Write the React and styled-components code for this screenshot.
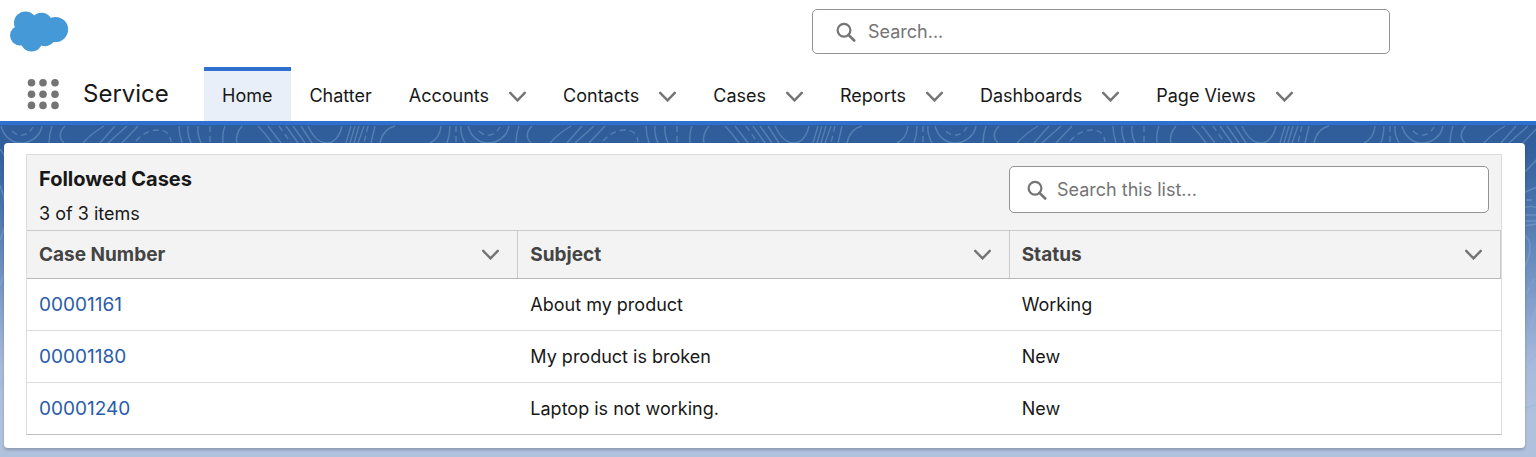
import React from "react";
import styled, { createGlobalStyle } from "styled-components";

const GlobalStyle = createGlobalStyle`
	*, *::before, *::after {
		box-sizing: border-box;
	}

	html, body, #root {
		height: 100%;
	}

	body {
		margin: 0;
		background-color: #b0c1de;
		color: #181818;
		font-family: Inter, "Liberation Sans", sans-serif;
		font-size: 18px;
		line-height: 24px;
	}
`;

const Page = styled.div`
	display: flex;
	flex-direction: column;
	min-height: 100%;
`;

const Header = styled.header`
	background-color: #fff;
	border-bottom: 4px solid #2e6fd0;
`;

const TopBar = styled.div`
	display: grid;
	grid-template-columns: 804px minmax(200px, 578px);
	align-items: center;
	column-gap: 8px;
	height: 67px;
	padding-bottom: 4px;
`;

const LogoLink = styled.a`
	display: flex;
	width: 60px;
	margin-left: 9px;
`;

const SearchBox = styled.label`
	display: flex;
	align-items: center;
	gap: ${(props) => (props.$compact ? "10px" : "12px")};
	height: ${(props) => (props.$compact ? "47px" : "45px")};
	width: ${(props) => (props.$compact ? "480px" : "auto")};
	padding: 0 ${(props) => (props.$compact ? "17px" : "23px")};

	background-color: #fff;
	border: 1px solid #939393;
	border-radius: 5px;
	color: #747474;
`;

const SearchInput = styled.input`
	flex: 1;
	min-width: 0;
	padding: 0;

	background: transparent;
	border: none;
	outline: none;
	color: #181818;
	font: inherit;

	&::placeholder {
		color: #747474;
		opacity: 1;
	}
`;

const NavBar = styled.nav`
	display: flex;
	height: 54px;
	padding-left: 27px;
`;

const LauncherButton = styled.button`
	display: flex;
	align-items: center;
	width: 33px;
	padding: 0;

	background: none;
	border: none;
	color: #747474;
`;

const AppName = styled.span`
	width: 121px;
	margin-left: 23px;

	font-size: 24px;
	line-height: 54px;
`;

const NavList = styled.ul`
	display: flex;
	margin: 0;
	padding: 0;
	list-style: none;
`;

const NavItem = styled.li`
	display: flex;
	align-items: center;
	gap: 20px;
	padding: 0 19px 0 18px;

	background-color: ${(props) => (props.$active ? "#e8eff9" : "transparent")};
	border-top: 4px solid ${(props) => (props.$active ? "#2e6fd0" : "transparent")};
`;

const NavLink = styled.a`
	color: inherit;
	text-decoration: none;
	white-space: nowrap;
`;

const IconButton = styled.button`
	display: flex;
	padding: 0;

	background: none;
	border: none;
	color: #747474;
`;

const Main = styled.main`
	display: grid;
	flex: 1;

	background: linear-gradient(#2e5d99 0, #315f9d 20px, #4672ab 75px, #7f9cc8 170px, #a8badb 240px, #b0c1de 290px);
`;

const Contours = styled.svg`
	grid-area: 1 / 1;
	width: 100%;
	height: 100%;
`;

const Card = styled.section`
	grid-area: 1 / 1;
	z-index: 1;
	align-self: start;
	margin: 18px 11px 9px 4px;
	padding: 11px 23px 13px 22px;

	background-color: #fff;
	border-radius: 4px;
	box-shadow: 0 2px 3px rgba(0, 0, 0, 0.2);
`;

const ListPanel = styled.div`
	border: 1px solid #dcdcdc;
	border-bottom-color: #c0c0c0;
`;

const ListHeader = styled.div`
	display: flex;
	justify-content: space-between;
	align-items: flex-start;
	padding: 11px 12px 4px;

	background-color: #f3f3f3;
`;

const ListTitle = styled.h2`
	margin: 0 0 10px;

	font-size: 20px;
	font-weight: 700;
	line-height: 26px;
`;

const ListCount = styled.p`
	margin: 0;
`;

const CaseTable = styled.table`
	width: 100%;
	table-layout: fixed;
	border-collapse: separate;
	border-spacing: 0;
`;

const HeadCell = styled.th`
	height: 49px;
	padding: 0 18px 0 12px;

	background-color: #f3f3f3;
	border: 1px solid #c9c9c9;
	border-left: none;
	border-bottom-color: #b8b8b8;
	color: #444;
	font-size: 19px;
	text-align: left;
`;

const HeadContent = styled.div`
	display: flex;
	justify-content: space-between;
	align-items: center;
`;

const Cell = styled.td`
	height: 52px;
	padding: 0 12px;

	border-bottom: 1px solid #dcdcdc;

	tr:last-child & {
		height: 51px;
		border-bottom: none;
	}
`;

const CaseLink = styled.a`
	color: #2a5caa;
	font-size: 19px;
	text-decoration: none;
`;

const navItems = [
  { label: "Home", active: true },
  { label: "Chatter" },
  { label: "Accounts", menu: true },
  { label: "Contacts", menu: true },
  { label: "Cases", menu: true },
  { label: "Reports", menu: true },
  { label: "Dashboards", menu: true },
  { label: "Page Views", menu: true },
];

const columns = ["Case Number", "Subject", "Status"];

const cases = [
  { number: "00001161", subject: "About my product", status: "Working" },
  { number: "00001180", subject: "My product is broken", status: "New" },
  { number: "00001240", subject: "Laptop is not working.", status: "New" },
];

const CloudLogo = () => (
  <svg width="60" height="42" viewBox="0 0 60 42" fill="#4599d7" aria-hidden="true">
    <circle cx="16.5" cy="12" r="11.5" />
    <circle cx="32.5" cy="12.5" r="10.8" />
    <circle cx="46.5" cy="18.5" r="12.6" />
    <circle cx="11" cy="24.5" r="10" />
    <circle cx="22.5" cy="29.5" r="11" />
    <circle cx="36" cy="24.5" r="10.7" />
    <path d="M14 12h34v14H14z" />
  </svg>
);

const SearchIcon = () => (
  <svg width="20" height="20" viewBox="0 0 20 20" fill="none" stroke="currentColor" aria-hidden="true">
    <circle cx="8" cy="8.3" r="6.4" strokeWidth="2.2" />
    <path d="M12.5 12.8L18.2 18.5" strokeWidth="2.6" strokeLinecap="round" />
  </svg>
);

const ChevronIcon = () => (
  <svg width="17" height="11" viewBox="0 0 17 11" fill="none" stroke="currentColor" aria-hidden="true">
    <path d="M1.2 1.8L8.5 9.4L15.8 1.8" strokeWidth="2.4" strokeLinecap="round" />
  </svg>
);

const LauncherIcon = () => (
  <svg width="33" height="32" viewBox="0 0 33 32" fill="currentColor" aria-hidden="true">
    {[4.5, 16, 28].map((x) =>
      [4.8, 16.2, 27.4].map((y) => <circle key={`${x}-${y}`} cx={x} cy={y} r="3.8" />)
    )}
  </svg>
);

// Map-like contour lines, repeated along the page
const ContourBackground = () => (
  <Contours aria-hidden="true">
    <defs>
      <pattern id="contours" width="467" height="340" patternUnits="userSpaceOnUse">
        <g fill="none" stroke="#8fb4da" strokeOpacity="0.38" strokeWidth="1.4">
          <path d="M1 1C4 12 12 18 21 18S40 12 42 1M52 1Q49 9 49 18M65 1C59 7 59 13 64 18" />
          <path d="M104 1Q92 8 83 18M115 1L100 18M127 1L108 18M138 1L122 18" />
          <path d="M179 1Q179 9 182 18M188 1Q187 9 191 18M198 1Q197 9 201 18M225 1Q222 9 223 18M242 1Q235 9 237 18" />
          <path d="M258 1Q265 8 272 18M268 1L281 18M286 1L298 18M293 1L305 18M301 1L312 18" />
          <path d="M308 1C313 12 320 18 327 18S340 11 342 1M351 1L346 18M355 1L350 18M359 1L354 18M364 1L358 18M375 1L371 18" />
          <path d="M395 1C387 3 382 8 380 18M441 1Q440 13 430 18M450 1Q450 10 447 18M461 1Q460 9 465 18" />
          <path d="M12 6Q17 11 23 10T33 2M136 16Q146 5 158 5T171 17M210 1V18M279 1L291 18M368 1L364 18M456 1V18" strokeDasharray="6 4" />
          <path d="M122 48Q128 44 136 34M122 68L136 62M122 83Q130 80 136 83M122 90H136M122 96H136M122 101L136 99" />
          <path d="M122 109C133 116 130 130 122 145M122 225Q131 204 136 178M122 245Q130 238 136 228M122 284L136 279" />
          <path d="M125 75H132M126 168L134 152M126 236L132 233" strokeDasharray="6 4" />
          <path d="M0 24Q5 30 7 40M0 60Q4 70 5 82M0 115Q5 103 6 94M0 160L6 145M0 260L6 250" />
        </g>
      </pattern>
    </defs>
    <rect width="100%" height="340" fill="url(#contours)" />
  </Contours>
);

const App = () => {
  return (
    <Page>
      <GlobalStyle />
      <Header>
        <TopBar>
          <LogoLink href="#" aria-label="Salesforce">
            <CloudLogo />
          </LogoLink>
          <SearchBox>
            <SearchIcon />
            <SearchInput type="text" placeholder="Search..." aria-label="Search" />
          </SearchBox>
        </TopBar>
        <NavBar>
          <LauncherButton type="button" aria-label="App Launcher">
            <LauncherIcon />
          </LauncherButton>
          <AppName>Service</AppName>
          <NavList>
            {navItems.map((item) => (
              <NavItem key={item.label} $active={item.active}>
                <NavLink href="#" aria-current={item.active ? "page" : undefined}>
                  {item.label}
                </NavLink>
                {item.menu && (
                  <IconButton type="button" aria-label={`${item.label} list`}>
                    <ChevronIcon />
                  </IconButton>
                )}
              </NavItem>
            ))}
          </NavList>
        </NavBar>
      </Header>
      <Main>
        <ContourBackground />
        <Card>
          <ListPanel>
            <ListHeader>
              <div>
                <ListTitle>Followed Cases</ListTitle>
                <ListCount>3 of 3 items</ListCount>
              </div>
              <SearchBox $compact>
                <SearchIcon />
                <SearchInput type="text" placeholder="Search this list..." aria-label="Search this list" />
              </SearchBox>
            </ListHeader>
            <CaseTable>
              <thead>
                <tr>
                  {columns.map((column) => (
                    <HeadCell key={column} scope="col">
                      <HeadContent>
                        {column}
                        <IconButton type="button" aria-label={`${column} actions`}>
                          <ChevronIcon />
                        </IconButton>
                      </HeadContent>
                    </HeadCell>
                  ))}
                </tr>
              </thead>
              <tbody>
                {cases.map((item) => (
                  <tr key={item.number}>
                    <Cell>
                      <CaseLink href="#">{item.number}</CaseLink>
                    </Cell>
                    <Cell>{item.subject}</Cell>
                    <Cell>{item.status}</Cell>
                  </tr>
                ))}
              </tbody>
            </CaseTable>
          </ListPanel>
        </Card>
      </Main>
    </Page>
  );
};

export default App;
